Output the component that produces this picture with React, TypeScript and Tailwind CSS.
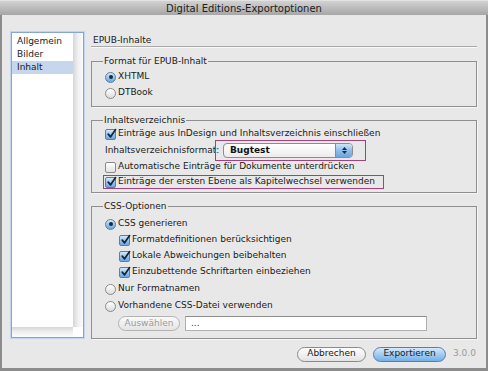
import React from 'react'

const Radio = ({ checked = false }: { checked?: boolean }) => (
  <span
    className={`flex items-center justify-center w-[11px] h-[11px] shrink-0 rounded-full border ${
      checked
        ? 'border-[#5b7ea8] bg-gradient-to-b from-[#d8e9fb] via-[#98c4ec] to-[#6aa6df]'
        : 'border-[#8a8a8a] bg-gradient-to-b from-[#ffffff] to-[#dcdcdc]'
    }`}
  >
    {checked && <span className="w-[4px] h-[4px] rounded-full bg-[#1c2a3c]" />}
  </span>
)

const Checkbox = ({ checked = false }: { checked?: boolean }) => (
  <span
    className={`relative flex items-center justify-center w-[11px] h-[11px] shrink-0 rounded-[2px] border ${
      checked
        ? 'border-[#5b7ea8] bg-gradient-to-b from-[#d8e9fb] via-[#98c4ec] to-[#6aa6df]'
        : 'border-[#8a8a8a] bg-gradient-to-b from-[#ffffff] to-[#e2e2e2]'
    }`}
  >
    {checked && (
      <svg width="11" height="11" viewBox="0 0 11 11" className="absolute -top-[2px] left-[0px]">
        <path d="M2.2 6.2 L4.6 8.8 L9.6 1.6" fill="none" stroke="#14233a" strokeWidth="1.7" strokeLinecap="round" strokeLinejoin="round" />
      </svg>
    )}
  </span>
)

const Row = ({ children, className = '' }: { children: React.ReactNode; className?: string }) => (
  <div className={`flex items-center gap-[2px] h-[16px] whitespace-nowrap ${className}`}>{children}</div>
)

const Group = ({ title, children, className = '' }: { title: string; children: React.ReactNode; className?: string }) => (
  <fieldset className={`border border-[#8f8f8f] shadow-[1px_1px_0_#f6f6f6] px-[13px] ${className}`}>
    <legend className="px-[1px] -ml-[2px] leading-[12px] text-[#1a1a1a]">{title}</legend>
    {children}
  </fieldset>
)

export default function App() {
  return (
    <div className="w-[488px] h-[371px] flex flex-col bg-[#8c8c8c] px-[2px] pb-[3px] font-['DejaVu_Sans',sans-serif] text-[9px] text-[#1a1a1a]">
      {/* Title bar */}
      <div className="-mx-[2px] h-[15px] shrink-0 flex items-center justify-center bg-gradient-to-b from-[#d2d2d2] to-[#a6a6a6] border-t border-[#e2e2e2] text-[10px] text-[#202020]">
        Digital Editions-Exportoptionen
      </div>

      {/* Body */}
      <div className="flex-1 flex flex-col bg-[#e8e8e8] pt-[17px] pl-[9px] pr-[9px] pb-[6px]">
        <div className="flex gap-[7px] h-[306px]">
          {/* Category list */}
          <div className="w-[73px] h-full shrink-0 flex flex-col bg-white border border-[#86a6d2] shadow-[0_0_0_1px_#c3d5ec]">
            <div className="flex-1 flex">
              <div className="flex-1 pt-[2px]">
                <div className="h-[13px] pl-[5px] leading-[13px]">Allgemein</div>
                <div className="h-[13px] pl-[5px] leading-[13px]">Bilder</div>
                <div className="h-[13px] pl-[5px] leading-[13px] bg-[#c6d6ec]">Inhalt</div>
              </div>
              <div className="w-[10px] bg-gradient-to-r from-[#d6d6d6] via-[#f0f0f0] to-[#fbfbfb]" />
            </div>
            <div className="h-[10px] flex">
              <div className="flex-1 bg-gradient-to-b from-[#d6d6d6] via-[#f0f0f0] to-[#fbfbfb]" />
              <div className="w-[10px] bg-white" />
            </div>
          </div>

          {/* Right panel */}
          <div className="flex-1 flex flex-col">
            <div className="pt-[3px] pl-[2px] leading-[11px] h-[15px] border-b border-[#a9a9a9] shadow-[0_1px_0_#f8f8f8]">EPUB-Inhalte</div>

            <Group title="Format für EPUB-Inhalt" className="mt-[8px] pb-[5px]">
              <div className="pt-[2px]">
                <Row>
                  <Radio checked />
                  <span>XHTML</span>
                </Row>
                <Row>
                  <Radio />
                  <span>DTBook</span>
                </Row>
              </div>
            </Group>

            <Group title="Inhaltsverzeichnis" className="mt-[7px] pb-[3px]">
              <Row>
                <Checkbox checked />
                <span>Einträge aus InDesign und Inhaltsverzeichnis einschließen</span>
              </Row>
              <div className="flex items-center h-[17px] whitespace-nowrap">
                <span className="w-[110px] shrink-0">Inhaltsverzeichnisformat:</span>
                <div className="-my-[2px] border border-[#a2417c] pl-[7px] pr-[12px] pt-[2px] pb-[2px]">
                  <div className="w-[130px] h-[15px] flex rounded-[4px] border border-[#8d8d8d] bg-gradient-to-b from-white to-[#ececec] overflow-hidden">
                    <span className="flex-1 pl-[6px] leading-[13px] font-bold text-[#111]">Bugtest</span>
                    <span className="w-[17px] flex flex-col items-center justify-center gap-[1px] border-l border-[#6f8fb8] bg-gradient-to-b from-[#cfe4f8] via-[#8fbde9] to-[#6aa6df]">
                      <svg width="5" height="3" viewBox="0 0 5 3"><path d="M0 3 L2.5 0 L5 3Z" fill="#1c2a3c" /></svg>
                      <svg width="5" height="3" viewBox="0 0 5 3"><path d="M0 0 L2.5 3 L5 0Z" fill="#1c2a3c" /></svg>
                    </span>
                  </div>
                </div>
              </div>
              <Row>
                <Checkbox />
                <span>Automatische Einträge für Dokumente unterdrücken</span>
              </Row>
              <div className="flex">
                <div className="flex items-center gap-[2px] h-[14px] -ml-[2px] pl-[1px] pr-[8px] border border-[#a2417c] whitespace-nowrap">
                  <Checkbox checked />
                  <span>Einträge der ersten Ebene als Kapitelwechsel verwenden</span>
                </div>
              </div>
            </Group>

            <Group title="CSS-Optionen" className="mt-[7px] pb-[6px]">
              <div className="pt-[4px]">
                <Row>
                  <Radio checked />
                  <span>CSS generieren</span>
                </Row>
                <Row className="pl-[14px]">
                  <Checkbox checked />
                  <span>Formatdefinitionen berücksichtigen</span>
                </Row>
                <Row className="pl-[14px]">
                  <Checkbox checked />
                  <span>Lokale Abweichungen beibehalten</span>
                </Row>
                <Row className="pl-[14px]">
                  <Checkbox checked />
                  <span>Einzubettende Schriftarten einbeziehen</span>
                </Row>
                <Row className="mt-[1px]">
                  <Radio />
                  <span>Nur Formatnamen</span>
                </Row>
                <Row className="mt-[1px]">
                  <Radio />
                  <span>Vorhandene CSS-Datei verwenden</span>
                </Row>
                <div className="flex items-center h-[17px] mt-[1px] pl-[13px] gap-[5px]">
                  <span className="w-[62px] h-[15px] flex items-center justify-center rounded-full border border-[#b3b3b3] bg-gradient-to-b from-[#fafafa] to-[#e4e4e4] text-[#9b9b9b]">
                    Auswählen
                  </span>
                  <span className="w-[242px] h-[15px] flex items-center pl-[5px] bg-white border border-[#b0b0b0] border-t-[#8e8e8e] text-[#333]">
                    ...
                  </span>
                </div>
              </div>
            </Group>
          </div>
        </div>

        {/* Footer */}
        <div className="mt-[8px] flex items-center justify-end gap-[7px] h-[16px]">
          <span className="w-[69px] h-[15px] flex items-center justify-center rounded-full border border-[#8a8a8a] bg-gradient-to-b from-white to-[#e3e3e3]">
            Abbrechen
          </span>
          <span className="w-[73px] h-[15px] flex items-center justify-center rounded-full border border-[#5b7ea8] bg-gradient-to-b from-[#d6e9fb] via-[#a1cbf0] to-[#74b0e6]">
            Exportieren
          </span>
          <span className="w-[24px] text-[#9b9b9b]">3.0.0</span>
        </div>
      </div>
    </div>
  )
}
